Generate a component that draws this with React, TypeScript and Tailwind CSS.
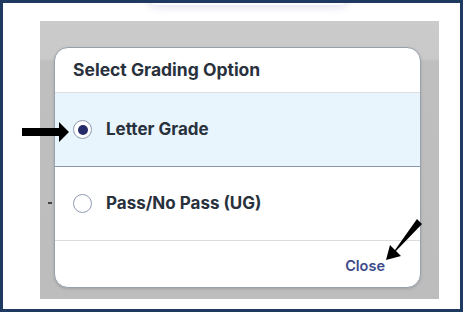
const Radio = ({ checked }: { checked?: boolean }) => (
  <span className="flex h-[19px] w-[19px] shrink-0 items-center justify-center rounded-full border-[1.5px] border-[#8e9bb0] bg-white">
    {checked && <span className="h-[10px] w-[10px] rounded-full bg-[#262b6b]" />}
  </span>
);

export default function App() {
  return (
    <div
      className="relative h-[312px] w-[463px] overflow-hidden border-[3px] border-[#1f3a60] bg-white"
      style={{ fontFamily: "Inter, 'Open Sans', sans-serif" }}
    >
      {/* faint shadow of something above the cut */}
      <div className="absolute left-[145px] top-[-14px] h-[16px] w-[200px] rounded-full bg-white shadow-[0_2px_8px_rgba(90,90,160,0.18)]" />

      <div className="pl-[37px] pt-[18px]">
        <div className="relative h-[278px] w-[399px] bg-[linear-gradient(to_bottom,#cbcbcb_0px,#c9c9c9_38px,#bfbfbf_40px,#bdbdbd_100%)] pl-[14px] pt-[26px]">
          <span className="absolute left-[8px] top-[181px] h-[2px] w-[4px] bg-[#444]" />
          <div className="w-[367px] overflow-hidden rounded-[14px] border border-[#98a1ad] bg-white shadow-[0_1px_3px_rgba(0,0,0,0.15)]">
            <div className="flex h-[45px] items-center border-b border-[#dedede] pl-[18px] text-[17.5px] font-bold text-[#29313d]">
              Select Grading Option
            </div>
            <div className="flex h-[74px] items-center gap-[14px] border-b border-[#8797b0] bg-[#e8f5fd] pl-[18px] text-[17px] font-bold text-[#29313d]">
              <Radio checked />
              Letter Grade
            </div>
            <div className="flex h-[74px] items-center gap-[14px] border-b border-[#dcdcdc] pl-[18px] text-[17px] font-bold text-[#29313d]">
              <Radio />
              Pass/No Pass (UG)
            </div>
            <div className="flex h-[46px] items-center justify-end pr-[35px] pt-[4px] text-[14.5px] font-semibold text-[#3c4a8c]">
              Close
            </div>
          </div>
        </div>
      </div>

      {/* annotation arrows */}
      <svg className="absolute left-[19px] top-[118px]" width="50" height="22" viewBox="0 0 50 22">
        <path d="M0 7 H37 V1 L47 11 L37 21 V15 H0 Z" fill="#000" />
      </svg>
      <svg className="absolute left-[376px] top-[210px]" width="48" height="52" viewBox="0 0 48 52">
        <path d="M38 6 L43 11 L17 38 L22 43 L7 47 L11 32 L16 37 Z" fill="#000" />
      </svg>
    </div>
  );
}
